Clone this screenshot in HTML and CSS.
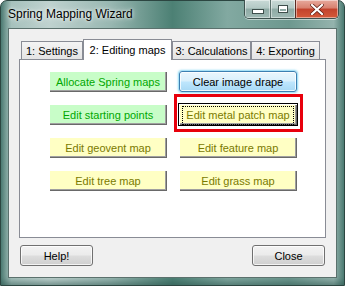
FILE: index.html
```html
<!DOCTYPE html>
<html lang="en">
<head>
  <meta charset="UTF-8">
  <title>Spring Mapping Wizard</title>
  <link rel="stylesheet" href="styles.css">
</head>
<body>
  <div class="window">
    <div class="titlebar">
      <span class="title">Spring Mapping Wizard</span>
      <div class="controls">
        <span class="ctl ctl-min"><i class="min-bar"></i></span>
        <span class="ctl ctl-max"><i class="max-box"></i></span>
        <span class="ctl ctl-close">
          <svg width="14" height="11" viewBox="0 0 14 11">
            <path d="M2 1 L12 10 M12 1 L2 10" stroke="#5a1c12" stroke-width="3.6" stroke-linecap="square"/>
            <path d="M2 1 L12 10 M12 1 L2 10" stroke="#fff" stroke-width="2.2" stroke-linecap="square"/>
          </svg>
        </span>
      </div>
    </div>

    <div class="client">
      <div class="tabs">
        <div class="tab tab-1">1: Settings</div>
        <div class="tab tab-2 active">2: Editing maps</div>
        <div class="tab tab-3">3: Calculations</div>
        <div class="tab tab-4">4: Exporting</div>
      </div>

      <div class="panel">
        <div class="grid">
          <button class="cbtn green">Allocate Spring maps</button>
          <button class="vbtn focus">Clear image drape</button>
          <button class="cbtn green">Edit starting points</button>
          <div class="mark-wrap">
            <button class="cbtn yellow default"><span class="dots">Edit metal patch map</span></button>
            <div class="mark"></div>
          </div>
          <button class="cbtn yellow">Edit geovent map</button>
          <button class="cbtn yellow">Edit feature map</button>
          <button class="cbtn yellow">Edit tree map</button>
          <button class="cbtn yellow">Edit grass map</button>
        </div>
      </div>

      <div class="footer">
        <button class="vbtn">Help!</button>
        <button class="vbtn">Close</button>
      </div>
    </div>
  </div>
</body>
</html>
```

FILE: styles.css
```css
body {
  margin: 0;
  font-family: "Liberation Sans", Arial, sans-serif;
  font-size: 11px;
  background: #fff;
}
.window {
  width: 345px;
  height: 286px;
  box-sizing: border-box;
  display: flex;
  flex-direction: column;
  padding: 0 7px 7px;
  border: 1px solid #2c4641;
  border-radius: 7px 7px 0 0;
  background: linear-gradient(90deg, #4f7e75 0%, #a6c1bc 3%, #bfd2cf 14%, #98b7b1 32%, #4c8074 50%, #82a9a1 66%, #6d988f 84%, #94b3ad 97%, #4f7e75 100%);
  box-shadow: inset 0 -7px 6px -4px rgba(40, 80, 72, .55);
}
.titlebar {
  height: 27px;
  display: flex;
  justify-content: space-between;
  align-items: flex-start;
}
.title {
  padding-top: 6px;
  font-size: 12px;
  color: #000;
  text-shadow: 0 0 6px rgba(255, 255, 255, .9), 0 0 3px rgba(255, 255, 255, .8);
}
.controls {
  display: flex;
  margin-top: -1px;
  margin-right: -2px;
  height: 18px;
  border: 1px solid #3d514e;
  border-top: none;
  border-radius: 0 0 5px 5px;
  overflow: hidden;
  box-shadow: 0 1px 0 rgba(255, 255, 255, .5);
}
.ctl {
  display: flex;
  align-items: center;
  justify-content: center;
  width: 25px;
  height: 18px;
  box-sizing: border-box;
  background: linear-gradient(#c9dad7 0%, #b3c9c5 45%, #8eaaa5 50%, #9fb9b4 100%);
  box-shadow: inset 0 0 0 1px rgba(255, 255, 255, .45);
}
.ctl-max {
  border-left: 1px solid #5c716d;
}
.ctl-close {
  width: 43px;
  border-left: 1px solid #5c2a22;
  background: linear-gradient(#e7aa9d 0%, #d8806e 45%, #c2422c 50%, #d45a3a 100%);
}
.min-bar {
  display: block;
  width: 10px;
  height: 3px;
  margin-top: 5px;
  background: #fff;
  border: 1px solid #3e4f4c;
}
.max-box {
  display: block;
  width: 8px;
  height: 6px;
  border: 1px solid #3e4f4c;
  box-shadow: inset 0 0 0 1px #fff, inset 0 2px 0 1px #fff;
}
.client {
  flex: 1;
  display: flex;
  flex-direction: column;
  padding: 10px 10px 0;
  background: #f0f0f0;
  border: 1px solid #5b716d;
}
.tabs {
  display: flex;
  align-items: flex-end;
  padding-left: 2px;
}
.tab {
  box-sizing: border-box;
  height: 18px;
  padding-top: 3px;
  text-align: center;
  color: #000;
  border: 1px solid #898c95;
  border-bottom: none;
  background: linear-gradient(#f4f4f4, #e4e4e4);
}
.tab-1 { width: 62px; }
.tab-2 { width: 89px; }
.tab-3 { width: 79px; }
.tab-4 { width: 69px; }
.tab.active {
  position: relative;
  z-index: 1;
  height: 21px;
  margin-bottom: -1px;
  padding-top: 4px;
  background: #fff;
}
.panel {
  height: 179px;
  box-sizing: border-box;
  padding: 11px 0 0 29px;
  background: #fff;
  border: 1px solid #898c95;
}
.grid {
  display: grid;
  grid-template-columns: 118px 118px;
  grid-auto-rows: 21px;
  gap: 12px;
}
.cbtn {
  height: 21px;
  padding: 0;
  border: none;
  font-family: inherit;
  font-size: 11px;
  box-shadow: inset 1px 1px #fff, inset -1px -1px #696969, inset -2px -2px #a0a0a0;
}
.green {
  background: #c8fdc8;
  color: #00a800;
}
.yellow {
  background: #ffffc4;
  color: #7a7a00;
}
.mark-wrap {
  position: relative;
}
.default {
  width: 118px;
  outline: 1px solid #000;
}
.dots {
  display: block;
  margin: 2px 3px 2px 3px;
  padding: 2px 0 3px;
  border: 1px dotted #000;
}
.mark {
  position: absolute;
  left: -5px;
  top: -10px;
  width: 129px;
  height: 38px;
  box-sizing: border-box;
  border: 3px solid #e8000c;
}
.vbtn {
  height: 21px;
  padding: 0;
  font-family: inherit;
  font-size: 11px;
  color: #000;
  border: 1px solid #707070;
  border-radius: 3px;
  background: linear-gradient(#f2f2f2 0%, #ebebeb 48%, #dddddd 52%, #cfcfcf 100%);
  box-shadow: inset 0 0 0 1px rgba(255, 255, 255, .75);
}
.vbtn.focus {
  border-color: #3c7fb1;
  background: linear-gradient(#eaf6fd 0%, #d9f0fc 48%, #bee6fd 52%, #a7d9f5 100%);
  box-shadow: inset 0 0 0 1px rgba(255, 255, 255, .8), 0 0 2px 1px rgba(90, 200, 240, .7);
}
.footer {
  display: flex;
  justify-content: space-between;
  padding: 7px 1px 0;
}
.footer .vbtn {
  width: 73px;
  height: 21px;
}
```
